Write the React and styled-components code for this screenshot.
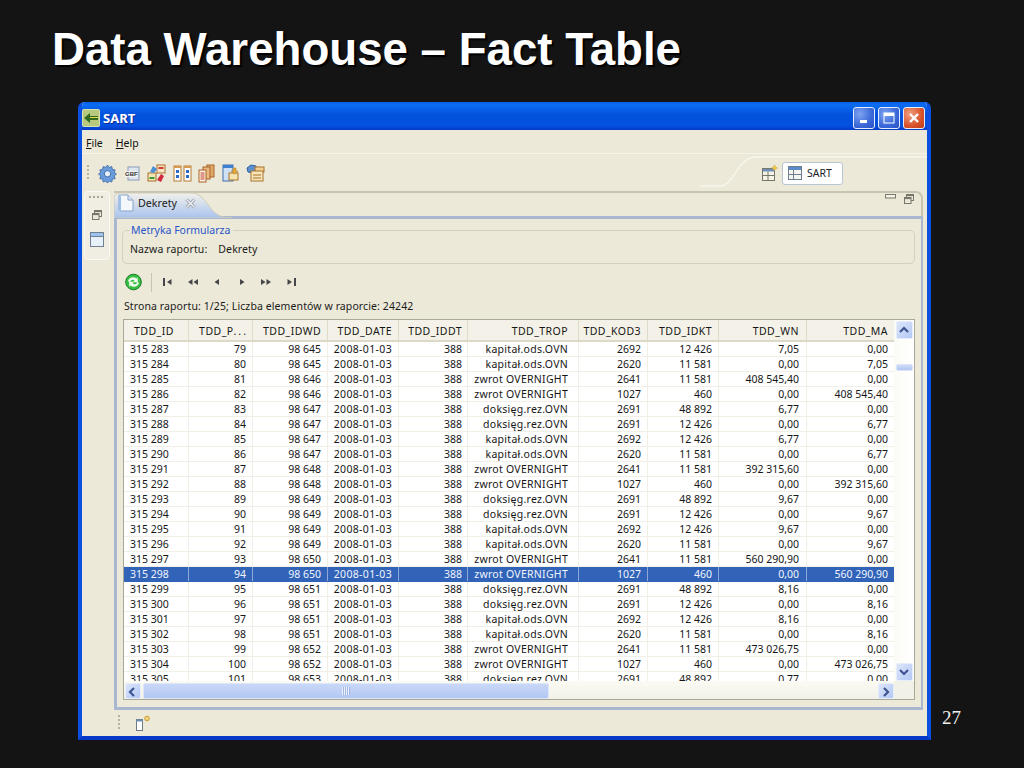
import React from "react";
import styled, { createGlobalStyle } from "styled-components";

const Global = createGlobalStyle`
  html, body { margin: 0; padding: 0; background: #141414; }
  #root { width: 1024px; height: 768px; overflow: hidden; }
`;

const UI = `"Noto Sans", "Liberation Sans", sans-serif`;

const Slide = styled.div`
  width: 1024px; height: 768px; background: #141414; display: flex; flex-direction: column;
`;
const Title = styled.h1`
  margin: 0; padding: 25px 0 0 52px; height: 78px; box-sizing: border-box;
  font: bold 45.65px/50px "Liberation Sans", Arial, sans-serif; color: #fff;
  text-shadow: 2px 2px 1px #000;
`;
const Stage = styled.div`
  display: flex; align-items: flex-end; padding-left: 78px; margin-top: 24px;
`;
const PageNumber = styled.div`
  font: 19px/24px "Liberation Serif", serif; color: #f0f0f0; margin: 0 0 10px 11px;
`;
const Win = styled.div`
  width: 853px; height: 638px; box-sizing: border-box; background: #ece9d8;
  border: solid #0a4fe0; border-width: 0 4px 4px 4px; border-radius: 6px 6px 0 0;
  border-bottom-color: #0838c8; display: flex; flex-direction: column; overflow: hidden;
`;
const TitleBar = styled.div`
  height: 28px; flex: none; display: flex; align-items: center; padding: 4px 6px 0 4px;
  box-sizing: border-box; margin: 0 -4px;
  background: linear-gradient(#0a5fe8 0, #0b6cf2 10%, #0452dc 45%, #0450e0 85%, #0338c8 100%);
`;
const TitleText = styled.span`
  font: bold 13px/18px ${UI}; color: #fff; margin-left: 3px; flex: 1; text-shadow: 1px 1px 0 #0a2a9a;
`;
const CaptionBtn = styled.div`
  width: 22px; height: 22px; box-sizing: border-box; margin-left: 3px; border-radius: 3px;
  border: 1px solid #e6eefc; display: flex; align-items: center; justify-content: center;
  background: ${p => p.$close
    ? "radial-gradient(circle at 30% 30%, #f0a080, #d8532c 60%, #c03a18)"
    : "radial-gradient(circle at 30% 30%, #7ea4f0, #3a68d8 60%, #2a50c8)"};
`;
const MenuBar = styled.div`
  height: 24px; flex: none; display: flex; align-items: center; gap: 13px; padding: 3px 0 0 4px; box-sizing: border-box;
  font: 10.5px/14px ${UI}; color: #111; border-bottom: 1px solid #f7f5ea;
`;
const MenuKey = styled.span`text-decoration: underline;`;
const ToolBar = styled.div`
  height: 36px; flex: none; display: flex; align-items: center; position: relative; padding: 2px 84px 0 5px;
  box-sizing: border-box;
`;
const Grip = styled.div`
  width: 2px; height: 16px; margin-right: 8px; flex: none;
  background: repeating-linear-gradient(#b5b2a0 0 2px, transparent 2px 4px);
`;
const ToolIcons = styled.div`display: flex; gap: 6.5px; align-items: center; flex: 1; padding-left: 1px;`;
const Curve = styled.svg`
  position: absolute; left: 618px; top: 0; width: 231px; height: 36px;
`;
const PerspBtn = styled.div`
  height: 23px; width: 61px; margin-left: 4px; box-sizing: border-box; background: #fff; border: 1px solid #b8c4d8; border-radius: 3px;
  display: flex; align-items: center; gap: 5px; padding-left: 5px; font: 10.5px/14px ${UI}; color: #222; position: relative;
`;
const NewPersp = styled.div`position: relative; display: flex;`;
const Body = styled.div`
  flex: none; height: 520px; display: flex; padding: 1px 5px 0 2px; gap: 4px; box-sizing: border-box;
`;
const Trim = styled.div`
  width: 26px; height: 69px; flex: none; box-sizing: border-box; background: #f0eee2; border: 1px solid #fbfaf2; border-radius: 4px;
  display: flex; flex-direction: column; align-items: center; gap: 12px; padding-top: 4px;
`;
const TrimDots = styled.div`
  width: 16px; height: 2px; background: repeating-linear-gradient(90deg, #a8a595 0 2px, transparent 2px 4px);
`;
const Editor = styled.div`
  flex: 1; display: flex; flex-direction: column; height: 519px;
`;
const TabStrip = styled.div`
  height: 25px; flex: none; display: flex; align-items: stretch; justify-content: space-between; box-sizing: border-box;
  border-top: 2px solid #c8c4b2; border-right: 2px solid #c8c4b2; border-top-right-radius: 7px; position: relative;
`;
const Tab = styled.div`
  width: 118px; height: 26px; margin-top: -1px; display: flex; align-items: center; gap: 3px; padding: 0 0 4px 3px; box-sizing: border-box; position: relative;
  font: 10.7px/14px ${UI}; color: #222; z-index: 1;
`;
const TabShape = styled.svg`position: absolute; left: 0; top: 0; width: 118px; height: 26px; z-index: -1;`;
const TabClose = styled.span`margin-left: 5px; display: flex;`;
const ViewBtns = styled.div`display: flex; gap: 8px; padding: 1px 7px 0 0; align-items: flex-start;`;
const Panel = styled.div`
  flex: 1; min-height: 0; box-sizing: border-box; border: solid #a9b8cf; border-width: 3px 2px 3px 3px;
  display: flex; flex-direction: column; padding: 0 6px 7px 5px; background: #ece9d8;
`;
const Fieldset = styled.fieldset`
  margin: 4px 0 0; padding: 0 0 0 7px; height: 41px; box-sizing: border-box; border: 1px solid #d4d0bd; border-radius: 5px;
  font: 10.5px/14px ${UI}; color: #1b1b1b; flex: none;
`;
const Legend = styled.legend`
  padding: 0 3px 0 1px; margin-left: 0; color: #2a55c8; font: 10.5px/14px ${UI};
`;
const FieldRow = styled.div`display: flex; gap: 11px; margin-top: 5px; letter-spacing: .1px;`;
const NavBar = styled.div`
  height: 24px; flex: none; display: flex; align-items: center; margin-top: 6px; padding-left: 3px;
`;
const NavDivider = styled.div`width: 1px; height: 19px; background: #c8c4b2; margin: 0 8px 0 9px;`;
const NavBtns = styled.div`display: flex; gap: 8.5px; align-items: center;`;
const Info = styled.div`
  font: 10.5px/14px ${UI}; color: #1b1b1b; margin: 5px 0 6px 2px; flex: none; letter-spacing: .1px;
`;
const TableFrame = styled.div`
  height: 381px; flex: none; box-sizing: border-box; border: 1px solid #a8a899; display: grid;
  grid-template-columns: 770px 20px; grid-template-rows: 361px 18px; background: #fff; overflow: hidden;
  margin-left: 1px; width: 792px;
`;
const RowsClip = styled.div`overflow: hidden; background: #fff;`;
const Row = styled.div`
  display: grid; grid-template-columns: 65px 64px 75px 71px 69px 111px 69px 71px 88px 87px;
  height: ${p => (p.$head ? 22 : 15)}px; box-sizing: border-box;
  font: 10.5px/14px ${UI};
  color: ${p => (p.$selected ? "#f2f5fc" : "#161616")};
  background: ${p => (p.$head ? "#f4f2e8" : p.$selected ? "#3163b8" : "#fff")};
  border-bottom: ${p => (p.$head ? "2px solid #dcd9c9" : p.$selected ? "1px solid #3163b8" : "1px solid #f1efe6")};
  letter-spacing: ${p => (p.$head ? ".45px" : "0")};
`;
const Cell = styled.div`
  text-align: ${p => (p.$left ? "left" : "right")};
  white-space: nowrap; box-sizing: border-box; height: ${p => (p.$head ? "auto" : "14px")};
  padding: ${p => (p.$head ? "4px" : "0")} ${p => p.$pr}px 0 ${p => p.$pl}px;
  letter-spacing: ${p => (p.$wide ? `${p.$wide}px` : "inherit")};
  border-right: 1px solid ${p => (p.$head ? "#dedbcb" : p.$selected ? "#8fa8d8" : "#f1efe6")};
  &:last-child { border-right: 0; }
`;
const Dots = styled.span`letter-spacing: 2px; margin-right: -2px;`;
const VScroll = styled.div`
  background: linear-gradient(90deg, #fbfbf6, #fff); display: flex; flex-direction: column; align-items: center; justify-content: space-between;
  position: relative; padding: 1px 0 0;
`;
const HScroll = styled.div`
  background: linear-gradient(#fbfbf4, #f1f1e8); display: flex; align-items: stretch; padding: 2px 0 0 1px; position: relative;
`;
const ScrollBtn = styled.div`
  width: ${p => p.$w}px; height: ${p => p.$h}px; flex: none; border-radius: 2px; box-sizing: border-box; border: 1px solid #e6ecfa;
  background: linear-gradient(135deg, #dce6fb, #b4c8f4); display: flex; align-items: center; justify-content: center;
`;
const VThumb = styled.div`
  position: absolute; left: 2px; top: 44px; width: 17px; height: 7px; border-radius: 2px;
  background: linear-gradient(#cfdcf8, #b2c6f2); border: 1px solid #dbe4f8; box-sizing: border-box;
`;
const HThumb = styled.div`
  width: 406px; margin-left: 2px; border-radius: 2px; box-sizing: border-box; border: 1px solid #dde6f9;
  background: linear-gradient(#c9d8f8, #b2c7f3); display: flex; align-items: center; justify-content: center;
`;
const HSpacer = styled.div`flex: 1;`;
const GripLines = styled.div`
  width: 8px; height: 8px; background: repeating-linear-gradient(90deg, #eef3fe 0 1px, #9fb6e8 1px 2px);
`;
const Corner = styled.div`background: #f1f1e8;`;
const Status = styled.div`
  flex: 1; display: flex; align-items: center; padding-left: 36px; gap: 7px; box-sizing: border-box; min-height: 0;
`;
const IconLabel = styled.text`
  font: bold 6px "Liberation Sans", sans-serif; fill: #333;
`;

const Gear = () => (
  <svg width="19" height="19" viewBox="0 0 19 19">
    <path d="M9.500 1l1.600 2.400 2.700-.9.6 2.800 2.800.6-.9 2.700 2.200 1.400-2.200 1.900.9 2.700-2.800.6-.6 2.800-2.700-.9-1.600 2.300-1.600-2.300-2.700.9-.6-2.800-2.800-.6.9-2.700L.5 10l2.200-1.400-.9-2.700 2.800-.6.6-2.800 2.700.9z" fill="#6a9cdc" stroke="#2f5f9e" strokeWidth=".7"/>
    <circle cx="9.500" cy="9.800" r="3.200" fill="#e8eef8" stroke="#3a6cae"/>
  </svg>
);
const Ger = () => (
  <svg width="17" height="17" viewBox="0 0 17 17">
    <rect x="4" y="2" width="11" height="13" fill="#dfe6f0" stroke="#8a9ab8"/>
    <rect x="1" y="6" width="12" height="6" fill="#f4f4f0"/>
    <IconLabel x="1" y="11">GBF</IconLabel>
  </svg>
);
const Flow = () => (
  <svg width="19" height="19" viewBox="0 0 19 19">
    <rect x="1" y="9" width="8" height="8" fill="#f4e6b4" stroke="#a8702c"/><rect x="2.500" y="13" width="5" height="2" fill="#3a9a3a"/>
    <rect x="10" y="1" width="8" height="8" fill="#f6e6c8" stroke="#b0702c"/><rect x="11.500" y="3" width="5" height="2" fill="#d23c2c"/>
    <path d="M3 8l3-6 4 3-3 4z" fill="#4a8ed8"/><path d="M10 16l4-6 3 2-3 6z" fill="#d02a3c"/>
  </svg>
);
const Columns = () => (
  <svg width="19" height="19" viewBox="0 0 19 19">
    <rect x="1" y="2" width="7" height="15" fill="#fff" stroke="#b87a34"/><rect x="11" y="2" width="7" height="15" fill="#fff" stroke="#b87a34"/>
    <rect x="1" y="2" width="7" height="2" fill="#d89a50"/><rect x="11" y="2" width="7" height="2" fill="#d89a50"/>
    <rect x="3" y="6" width="3" height="3" fill="#2a6ac8"/><rect x="13" y="6" width="3" height="3" fill="#2a6ac8"/>
    <rect x="3" y="11" width="3" height="3" fill="#2a6ac8"/><rect x="13" y="11" width="3" height="3" fill="#2a6ac8"/>
  </svg>
);
const Pages = () => (
  <svg width="17" height="19" viewBox="0 0 17 19">
    <rect x="9" y="1" width="7" height="12" fill="#e0a868" stroke="#a8642c"/>
    <rect x="5" y="3" width="7" height="12" fill="#e8b87c" stroke="#a8642c"/>
    <rect x="1" y="6" width="7" height="12" fill="#fbf1e0" stroke="#a8642c"/>
    <path d="M2.500 9h4M2.500 11h4M2.500 13h4M2.500 15h4" stroke="#c43c2c"/>
  </svg>
);
const DocFolder = () => (
  <svg width="18" height="19" viewBox="0 0 18 19">
    <rect x="1" y="1" width="10" height="16" fill="#cfe0f4" stroke="#3f6fb0"/><rect x="1" y="1" width="10" height="3" fill="#3f7fd0"/>
    <rect x="7" y="9" width="9" height="7" fill="#f6e4b0" stroke="#a8742c"/>
    <path d="M11 4h3v3h2l-3.500 3L9 7h2z" fill="#e8a838" stroke="#a8742c" strokeWidth=".5"/>
  </svg>
);
const GearDocs = () => (
  <svg width="19" height="19" viewBox="0 0 19 19">
    <path d="M5 1l5 1 1 4-4 3-5-1-1-4z" fill="#5a8fd0" stroke="#2f5f9e"/>
    <rect x="9" y="3" width="9" height="5" fill="#f3cf90" stroke="#a8742c"/>
    <rect x="5" y="7" width="12" height="10" fill="#f7e4b8" stroke="#a8742c"/>
    <path d="M7 11h8M7 14h8" stroke="#a8742c"/>
  </svg>
);
const TableIcon = () => (
  <svg width="14" height="14" viewBox="0 0 14 14">
    <rect x=".5" y=".5" width="13" height="13" fill="#f6f6f0" stroke="#6f7f92"/>
    <rect x="1" y="1" width="12" height="3" fill="#5a8ac8"/>
    <path d="M1 8.500h12M5.500 4v9" stroke="#6f7f92"/>
  </svg>
);
const ViewWindow = () => (
  <svg width="14" height="15" viewBox="0 0 14 15">
    <rect x=".5" y=".5" width="13" height="14" fill="#e8f0fa" stroke="#6f8090"/>
    <rect x="1" y="1" width="12" height="3" fill="#9cc4ee"/>
    <path d="M1 4.500h12" stroke="#6f8090"/>
  </svg>
);
const NewTable = () => (
  <svg width="16" height="16" viewBox="0 0 16 16">
    <rect x=".5" y="3.500" width="12" height="12" fill="#f6f3e6" stroke="#75756a"/>
    <rect x="1" y="4" width="11" height="2.500" fill="#6f8fb8"/>
    <path d="M1 10.500h11M6 6.500v9" stroke="#75756a"/>
    <path d="M12.500 0l.9 2.100 2.100.9-2.100.9-.9 2.100-.9-2.100L9.500 3l2.100-.9z" fill="#f2cf50" stroke="#c89a20" strokeWidth=".5"/>
  </svg>
);
const ViewMin = () => (
  <svg width="11" height="5" viewBox="0 0 11 5"><rect x=".5" y=".5" width="10" height="3.500" fill="#f4f2e6" stroke="#77776c"/></svg>
);
const ViewRestore = () => (
  <svg width="10" height="10" viewBox="0 0 10 10">
    <rect x="2.500" y=".5" width="7" height="6" fill="#ece9d8" stroke="#77776c"/><rect x="2.500" y=".5" width="7" height="1.600" fill="#77776c"/>
    <rect x=".5" y="3.500" width="6.500" height="6" fill="#ece9d8" stroke="#77776c"/><rect x=".5" y="3.500" width="6.500" height="1.600" fill="#77776c"/>
  </svg>
);
const DocTab = () => (
  <svg width="18" height="18" viewBox="0 0 18 18">
    <path d="M2 1h9l5 5v11H4c-1.500 0-2-1-2-2z" fill="#f4f8fc" stroke="#86a2c8"/>
    <path d="M2 1v14c0 1 .6 2 2 2V3c0-1-1-2-2-2z" fill="#9cc0ea"/>
    <path d="M11 1v5h5" fill="#dce8f6" stroke="#86a2c8"/>
  </svg>
);
const XIcon = () => (
  <svg width="11" height="11" viewBox="0 0 11 11">
    <path d="M1.500 1.500l8 8M9.500 1.500l-8 8" stroke="#8d96a8" strokeWidth="3"/>
    <path d="M1.500 1.500l8 8M9.500 1.500l-8 8" stroke="#f4f4f0" strokeWidth="1.400"/>
  </svg>
);
const Refresh = () => (
  <svg width="17" height="18" viewBox="0 0 17 18">
    <circle cx="8.500" cy="9" r="7.800" fill="#38c040" stroke="#1a7a2a"/>
    <path d="M3 8c1-3.500 5.500-5 8.500-2.500l1-1.500.5 5.500-5-.6 1.500-1.400C7.500 6 5.500 7 5 9.500z" fill="#f0faf0"/>
    <path d="M14 10c-1 3.500-5.500 5-8.500 2.500l-1 1.500-.5-5.500 5 .6-1.500 1.400c2 1.500 4.500.5 5-1.500z" fill="#f0faf0"/>
  </svg>
);
const Nav = ({ d }) => (
  <svg width="16" height="12" viewBox="0 0 16 12"><path d={d} fill="#46464a"/></svg>
);
const navs = [
  "M3 2h2v8H3zM11.500 3v6L7 6z",
  "M7.500 3v6L3 6zM13 3v6L8.500 6z",
  "M10 3v6L5.500 6z",
  "M6 3v6l4.500-3z",
  "M3 3l4.500 3L3 9zM8.500 3L13 6l-4.500 3z",
  "M4.500 3L9 6 4.500 9zM11 2h2v8h-2z",
];
const Chevron = ({ dir }) => {
  const paths = {
    up: "M2 7l4-4 4 4", down: "M2 3l4 4 4-4", left: "M7 2L3 6l4 4", right: "M4 2l4 4-4 4",
  };
  return <svg width="12" height="12" viewBox="0 0 12 10"><path d={paths[dir]} fill="none" stroke="#3f5590" strokeWidth="2.200"/></svg>;
};
const NewView = () => (
  <svg width="17" height="17" viewBox="0 0 17 17">
    <rect x="1.500" y="4.500" width="6" height="11" fill="#fff" stroke="#6f7a88"/>
    <rect x="1.500" y="4.500" width="6" height="2" fill="#6f8fb8"/>
    <circle cx="12" cy="3.500" r="2.300" fill="#f2d680" stroke="#c89a30"/>
  </svg>
);
const AppIcon = () => (
  <svg width="18" height="18" viewBox="0 0 18 18">
    <rect width="18" height="18" rx="2" fill="#d8e2b0"/>
    <rect x="1" y="1" width="16" height="16" fill="#b6c97e"/>
    <path d="M16 7H8V4L2 9l6 5v-3h8z" fill="#2f6a20"/>
    <path d="M16 8H8v1h8z" fill="#f0d848"/>
  </svg>
);

const HEADERS = ["TDD_ID", "TDD_P", "TDD_IDWD", "TDD_DATE", "TDD_IDDT", "TDD_TROP", "TDD_KOD3", "TDD_IDKT", "TDD_WN", "TDD_MA"];
const K = "kapitał.ods.OVN", Z = "zwrot OVERNIGHT", D = "doksięg.rez.OVN";
const raw = [
  ["315 283","79","98 645",K,"2692","12 426","7,05","0,00"],
  ["315 284","80","98 645",K,"2620","11 581","0,00","7,05"],
  ["315 285","81","98 646",Z,"2641","11 581","408 545,40","0,00"],
  ["315 286","82","98 646",Z,"1027","460","0,00","408 545,40"],
  ["315 287","83","98 647",D,"2691","48 892","6,77","0,00"],
  ["315 288","84","98 647",D,"2691","12 426","0,00","6,77"],
  ["315 289","85","98 647",K,"2692","12 426","6,77","0,00"],
  ["315 290","86","98 647",K,"2620","11 581","0,00","6,77"],
  ["315 291","87","98 648",Z,"2641","11 581","392 315,60","0,00"],
  ["315 292","88","98 648",Z,"1027","460","0,00","392 315,60"],
  ["315 293","89","98 649",D,"2691","48 892","9,67","0,00"],
  ["315 294","90","98 649",D,"2691","12 426","0,00","9,67"],
  ["315 295","91","98 649",K,"2692","12 426","9,67","0,00"],
  ["315 296","92","98 649",K,"2620","11 581","0,00","9,67"],
  ["315 297","93","98 650",Z,"2641","11 581","560 290,90","0,00"],
  ["315 298","94","98 650",Z,"1027","460","0,00","560 290,90"],
  ["315 299","95","98 651",D,"2691","48 892","8,16","0,00"],
  ["315 300","96","98 651",D,"2691","12 426","0,00","8,16"],
  ["315 301","97","98 651",K,"2692","12 426","8,16","0,00"],
  ["315 302","98","98 651",K,"2620","11 581","0,00","8,16"],
  ["315 303","99","98 652",Z,"2641","11 581","473 026,75","0,00"],
  ["315 304","100","98 652",Z,"1027","460","0,00","473 026,75"],
  ["315 305","101","98 653",D,"2691","48 892","0,77","0,00"],
];
const PAD = [0, 6, 6, 6, 5, 10, 6, 6, 7, 6];
const WIDE = { 3: 0.35, 5: 0.27 };

export default function App() {
  return (
    <Slide>
      <Global />
      <Title>Data Warehouse – Fact Table</Title>
      <Stage>
        <Win>
          <TitleBar>
            <AppIcon />
            <TitleText>SART</TitleText>
            <CaptionBtn>
              <svg width="12" height="12" viewBox="0 0 12 12"><rect x="2" y="8" width="7" height="3" fill="#fff" /></svg>
            </CaptionBtn>
            <CaptionBtn>
              <svg width="14" height="14" viewBox="0 0 14 14"><rect x="2" y="2" width="10" height="10" fill="none" stroke="#fff" /><rect x="2" y="2" width="10" height="3" fill="#fff" /></svg>
            </CaptionBtn>
            <CaptionBtn $close>
              <svg width="14" height="14" viewBox="0 0 14 14"><path d="M3 3l8 8M11 3l-8 8" stroke="#fff" strokeWidth="2.400" /></svg>
            </CaptionBtn>
          </TitleBar>
          <MenuBar>
            <span><MenuKey>F</MenuKey>ile</span>
            <span><MenuKey>H</MenuKey>elp</span>
          </MenuBar>
          <ToolBar>
            <Curve viewBox="0 0 231 36" aria-hidden="true">
              <path d="M0 32h20c14 0 16-26 34-29h177" fill="none" stroke="#f8f6ec" strokeWidth="1.500" />
            </Curve>
            <Grip />
            <ToolIcons>
              <Gear /><Ger /><Flow /><Columns /><Pages /><DocFolder /><GearDocs />
            </ToolIcons>
            <NewPersp><NewTable /></NewPersp>
            <PerspBtn><TableIcon />SART</PerspBtn>
          </ToolBar>
          <Body>
            <Trim>
              <TrimDots />
              <ViewRestore />
              <ViewWindow />
            </Trim>
            <Editor>
              <TabStrip>
                <Tab>
                  <TabShape viewBox="0 0 118 26" aria-hidden="true">
                    <defs>
                      <linearGradient id="tabFill" x1="0" y1="0" x2="0" y2="1">
                        <stop offset="0" stopColor="#f2f1ea" />
                        <stop offset="1" stopColor="#a9c3ee" />
                      </linearGradient>
                    </defs>
                    <path d="M0 26V7C0 3 3 1 7 1h70c8 0 12 5 18 13 5 7 10 12 23 12z" fill="url(#tabFill)" stroke="#cfcab8" />
                  </TabShape>
                  <DocTab />
                  Dekrety
                  <TabClose><XIcon /></TabClose>
                </Tab>
                <ViewBtns><ViewMin /><ViewRestore /></ViewBtns>
              </TabStrip>
              <Panel>
                <Fieldset>
                  <Legend>Metryka Formularza</Legend>
                  <FieldRow><span>Nazwa raportu:</span><span>Dekrety</span></FieldRow>
                </Fieldset>
                <NavBar>
                  <Refresh />
                  <NavDivider />
                  <NavBtns>{navs.map((d, i) => <Nav key={i} d={d} />)}</NavBtns>
                </NavBar>
                <Info>Strona raportu: 1/25; Liczba elementów w raporcie: 24242</Info>
                <TableFrame>
                  <RowsClip>
                    <Row $head>
                      {HEADERS.map((h, i) => (
                        <Cell key={h} $head $left={i === 0} $pl={i === 0 ? 10 : 0} $pr={PAD[i]}>
                          {h}{i === 1 && <Dots>...</Dots>}
                        </Cell>
                      ))}
                    </Row>
                    {raw.map(r => {
                      const sel = r[0] === "315 298";
                      const cells = [r[0], r[1], r[2], "2008-01-03", "388", r[3], r[4], r[5], r[6], r[7]];
                      return (
                        <Row key={r[0]} $selected={sel}>
                          {cells.map((c, i) => (
                            <Cell key={i} $selected={sel} $wide={WIDE[i]} $left={i === 0} $pl={i === 0 ? 6 : 0} $pr={PAD[i]}>{c}</Cell>
                          ))}
                        </Row>
                      );
                    })}
                  </RowsClip>
                  <VScroll>
                    <ScrollBtn $w={17} $h={18}><Chevron dir="up" /></ScrollBtn>
                    <VThumb />
                    <ScrollBtn $w={17} $h={18}><Chevron dir="down" /></ScrollBtn>
                  </VScroll>
                  <HScroll>
                    <ScrollBtn $w={16} $h={16}><Chevron dir="left" /></ScrollBtn>
                    <HThumb><GripLines /></HThumb>
                    <HSpacer />
                    <ScrollBtn $w={16} $h={16}><Chevron dir="right" /></ScrollBtn>
                  </HScroll>
                  <Corner />
                </TableFrame>
              </Panel>
            </Editor>
          </Body>
          <Status>
            <Grip />
            <NewView />
          </Status>
        </Win>
        <PageNumber>27</PageNumber>
      </Stage>
    </Slide>
  );
}
